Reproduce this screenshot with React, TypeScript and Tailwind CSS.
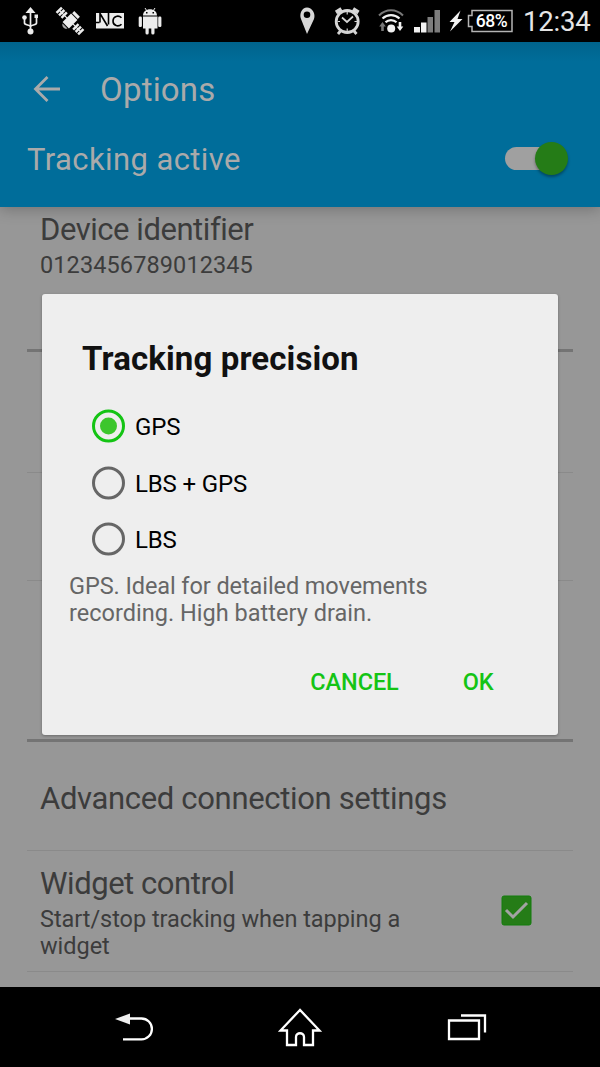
import type { ReactNode } from 'react'

const precisions = [
  { id: 'gps', label: 'GPS', checked: true },
  { id: 'lbs-gps', label: 'LBS + GPS', checked: false },
  { id: 'lbs', label: 'LBS', checked: false },
]

function StatusBar() {
  return (
    <div className="flex h-[42px] items-center bg-black text-[#e6e6e6]">
      <svg className="shrink-0" width="170" height="42" viewBox="0 0 170 42" fill="none" stroke="#ededed">
        {/* usb */}
        <path d="M30.500 12v19M24.500 18v5c0 2.500 6 1.500 6 4M36.500 17v6c0 2.500-6 1.500-6 4" strokeWidth="1.700" />
        <path d="M30.500 7l5 6h-10z" fill="#ededed" stroke="none" />
        <circle cx="30.500" cy="31.500" r="3" fill="#ededed" stroke="none" />
        <circle cx="24.500" cy="17.500" r="2.300" fill="#ededed" stroke="none" />
        <path d="M34.500 14.500h3.500v3.500h-3.500z" fill="#ededed" stroke="none" />
        {/* satellite */}
        <g transform="translate(70 21) rotate(45)" fill="#ededed" stroke="none">
          <path d="M-4.500-6h9v12h-9zM-4-10h8v3h-8zM-16.500-3.800h2.500v7.600h-2.500zM-13-3.800h2.500v7.600h-2.500zM-9.500-3.800h2.500v7.600h-2.500zM7-3.800h2.500v7.600h-2.500zM10.500-3.800h2.500v7.600h-2.500zM14-3.800h2.500v7.600h-2.500zM-15-.6h30v1.200h-30z" />
          <path d="M-3.500 7h7c-1 3-6 3-7 0z" fill="#aaa" />
        </g>
        {/* nfc */}
        <path d="M96 13h28v15.500H96z" fill="#ededed" stroke="none" />
        <path d="M95.500 22.500h4M100 22.500V13.500l7.500 12.500M108.500 13v11.500M121.500 17.800c-3-3-8.500-1.800-8.500 3.200s5.500 6.200 8.500 3.200" stroke="#000" strokeWidth="1.600" />
        {/* android */}
        <g fill="#ededed" stroke="none">
          <path d="M143 15.500c0-8.500 14-8.500 14 0zM143 16.500h14.500V28.500h-3V33a1.600 1.600 0 0 1-3.200 0v-4.500h-2.600V33a1.600 1.600 0 0 1-3.200 0v-4.500H143z" />
          <rect x="138.700" y="16.500" width="3.200" height="10.500" rx="1.300" />
          <rect x="158.200" y="16.500" width="3.200" height="10.500" rx="1.300" />
          <path d="M145 8l2 3M155 8l-2 3" stroke="#ededed" strokeWidth="1" />
          <path d="M146 12h1.500v1.500H146zM152.500 12h1.500v1.500h-1.500z" fill="#000" />
        </g>
      </svg>
      <svg className="ml-[120px] shrink-0" width="176" height="42" viewBox="290 0 176 42" fill="none">
        {/* location pin */}
        <path d="M307 34l-6-15c-2-5.500 1-11.500 6-11.500s9 6 7 11.500zM307 11.500a3.300 3.300 0 1 0 0 6.600 3.300 3.300 0 0 0 0-6.600z" fill="#d6d6d6" fillRule="evenodd" />
        {/* alarm */}
        <g stroke="#d6d6d6">
          <circle cx="347.200" cy="21.500" r="11" strokeWidth="2.800" />
          <path d="M342 17.500l5 4.500 6-5.500" strokeWidth="1.700" />
          <path d="M336 12.500l5.500-3.500M353 9l5.500 3.500" strokeWidth="4" />
          <path d="M340.500 31l-2.500 3M354 31l2.500 3" strokeWidth="2.800" />
          <path d="M347.200 12v2.500M347.200 28.500V31M337.500 21.500h2.500M354.500 21.500h2.500" strokeWidth="1.200" />
        </g>
        {/* wifi */}
        <path d="M379 15.500c7-7 17-7 24 0" stroke="#777" strokeWidth="2" />
        <path d="M382.500 18.500c5-4.500 12-4.500 17 0M385.500 22.300c3-3 8-3 11 0" stroke="#f2f2f2" strokeWidth="2.200" />
        <circle cx="391.200" cy="28.500" r="4" fill="#f2f2f2" />
        <path d="M382.500 22l3.300 4.500h-2v4.500h-2.600v-4.500h-2z" fill="#777" />
        <path d="M400 31l-3.300-4.500h2V22h2.600v4.500h2z" fill="#f2f2f2" />
        {/* signal */}
        <path d="M414 27h6v5.500h-6zM421 22.500h5.500v10H421z" fill="#f2f2f2" />
        <path d="M427.500 17h5.500v15.500h-5.500zM434.500 10h5.500v22.500h-5.500z" fill="#7d7d7d" />
        {/* charging */}
        <path d="M460.500 10.500l-11 11.500h5l-4.500 9.500 12.500-12.500h-5z" fill="#f2f2f2" />
      </svg>
      <div className="relative flex h-[24px] w-[47px] shrink-0 items-center justify-center">
        <svg className="absolute inset-0" width="47" height="24" viewBox="0 0 47 24" fill="none">
          <path d="M6 6.500V1.500H46V22.500H6v-5H2.500v-11z" stroke="#b5b5b5" strokeWidth="1.500" />
        </svg>
        <span className="relative pl-[4px] pt-px text-[17.500px] font-medium leading-none tracking-[-0.400px] text-white">68%</span>
      </div>
      <span className="ml-[10px] mt-[2px] whitespace-nowrap text-[27.500px] leading-none tracking-[-0.200px]">12:34</span>
    </div>
  )
}

function Header() {
  return (
    <header className="relative h-[165px] bg-[#006d9a] bg-linear-to-b from-[#00638c] from-0% to-[#006d9a] to-12% text-[#aaa] shadow-[0_2px_14px_rgba(0,0,0,0.25)]">
      <div className="flex h-[95px] items-center pl-[33px]">
        <svg className="mb-[2px]" width="29" height="28" viewBox="0 0 29 28" fill="none" stroke="#aaa" strokeWidth="2.800">
          <path d="M27 14H3M14.500 2L2.500 14l12 12" />
        </svg>
        <h1 className="ml-[38px] text-[33px] leading-none tracking-[0.200px]">Options</h1>
      </div>
      <div className="flex h-[42px] items-center justify-between pl-[27px] pr-[32px]">
        <span className="pt-[2px] text-[31px] leading-none tracking-[0.400px]">Tracking active</span>
        <div className="relative h-[23px] w-[63px]">
          <div className="h-full w-[54px] rounded-full bg-[#a0a0a0]" />
          <div className="absolute -top-[5px] right-0 size-[33px] rounded-full bg-[#257c17] shadow-[0_2px_3px_rgba(0,0,0,0.350)]" />
        </div>
      </div>
    </header>
  )
}

function Row({ className, children }: { className: string; children?: ReactNode }) {
  return <div className={`mx-[27px] pl-[13px] ${className}`}>{children}</div>
}

function Settings() {
  return (
    <main className="h-[780px] text-[#3c3c3c]">
      <Row className="h-[145px] border-b-3 border-[#747474] pt-[6px]">
        <div className="text-[31px] leading-[34px] tracking-[-0.450px]">Device identifier</div>
        <div className="mt-[5px] text-[23.500px] leading-[27px] tracking-[0.100px]">0123456789012345</div>
      </Row>
      <Row className="h-[121px] border-b border-[#8a8a8a]" />
      <Row className="h-[108px] border-b border-[#8a8a8a]" />
      <Row className="h-[161px] border-b-3 border-[#747474]" />
      <Row className="flex h-[109px] items-center border-b border-[#8a8a8a] pt-[6px]">
        <div className="text-[31px] leading-[34px] tracking-[-0.330px]">Advanced connection settings</div>
      </Row>
      <Row className="flex h-[121px] items-center justify-between border-b border-[#8a8a8a] pr-[41px]">
        <div className="pt-[4px]">
          <div className="text-[31px] leading-[34px] tracking-[-0.450px]">Widget control</div>
          <p className="mt-[5px] text-[23.500px] leading-[27px] tracking-[-0.040px]">
            Start/stop tracking when tapping a<br />
            widget
          </p>
        </div>
        <svg className="mb-px" width="31" height="31" viewBox="0 0 31 31" fill="none">
          <rect x="1" y="1" width="29" height="29" rx="2" fill="#257c17" stroke="#127d0c" />
          <path d="M5 15l7 7L26 8" stroke="#a3a3a3" strokeWidth="3" />
        </svg>
      </Row>
    </main>
  )
}

function PrecisionDialog() {
  return (
    <div role="dialog" className="absolute left-[42px] top-[294px] h-[440.500px] w-[515.500px] rounded-[3px] bg-[#eee] shadow-[0_1px_3px_rgba(0,0,0,0.300)]">
      <h2 className="pl-[40px] pt-[47px] text-[33px] font-bold leading-[36px] tracking-[0.120px] text-[#111]">Tracking precision</h2>
      <ul className="pl-[50px] pt-[20.500px]">
        {precisions.map((option) => (
          <li key={option.id} className="flex h-[56.700px] items-center">
            <svg width="33" height="34" viewBox="0 0 33 34" fill="none">
              <circle cx="16.500" cy="17" r="15" stroke={option.checked ? '#14c414' : '#666'} strokeWidth="3" />
              {option.checked && <circle cx="16.500" cy="17" r="8.500" fill="#3cc62c" />}
            </svg>
            <span className="ml-[10px] pt-[2px] text-[24px] leading-none tracking-[-0.150px] text-black">{option.label}</span>
          </li>
        ))}
      </ul>
      <p className="pl-[27px] pt-[5.500px] text-[23.500px] leading-[27.300px] tracking-[-0.080px] text-[#666]">
        GPS. Ideal for detailed movements<br />
        <span className="tracking-[0.020px]">recording. High battery drain.</span>
      </p>
      <div className="mt-[40px] flex justify-end gap-[64px] pr-[64px] text-[23.500px] font-medium leading-[28px] tracking-[-0.100px] text-[#14c414]">
        <button>CANCEL</button>
        <button>OK</button>
      </div>
    </div>
  )
}

function NavBar() {
  return (
    <nav className="flex h-[80px] items-center bg-black">
      <svg width="600" height="80" viewBox="0 987 600 80" fill="none" stroke="#fff" strokeWidth="2.300">
        <path d="M128 1018.500h13.500a10.400 10.400 0 0 1 0 20.800H123" />
        <path d="M115 1019l15-5.500v11z" fill="#eee" stroke="none" />
        <path d="M300 1010l-19.500 20.500h6.500v14.500h9v-8c0-5 8-5 8 0v8h9v-14.500h6.500z" />
        <path d="M449 1020.500h30v18.500h-30zM461 1015.500h24v17" />
      </svg>
    </nav>
  )
}

export default function App() {
  return (
    <div className="relative h-[1067px] w-[600px] overflow-hidden bg-[#979797] font-['Roboto',sans-serif]">
      <StatusBar />
      <Header />
      <Settings />
      <NavBar />
      <PrecisionDialog />
    </div>
  )
}
